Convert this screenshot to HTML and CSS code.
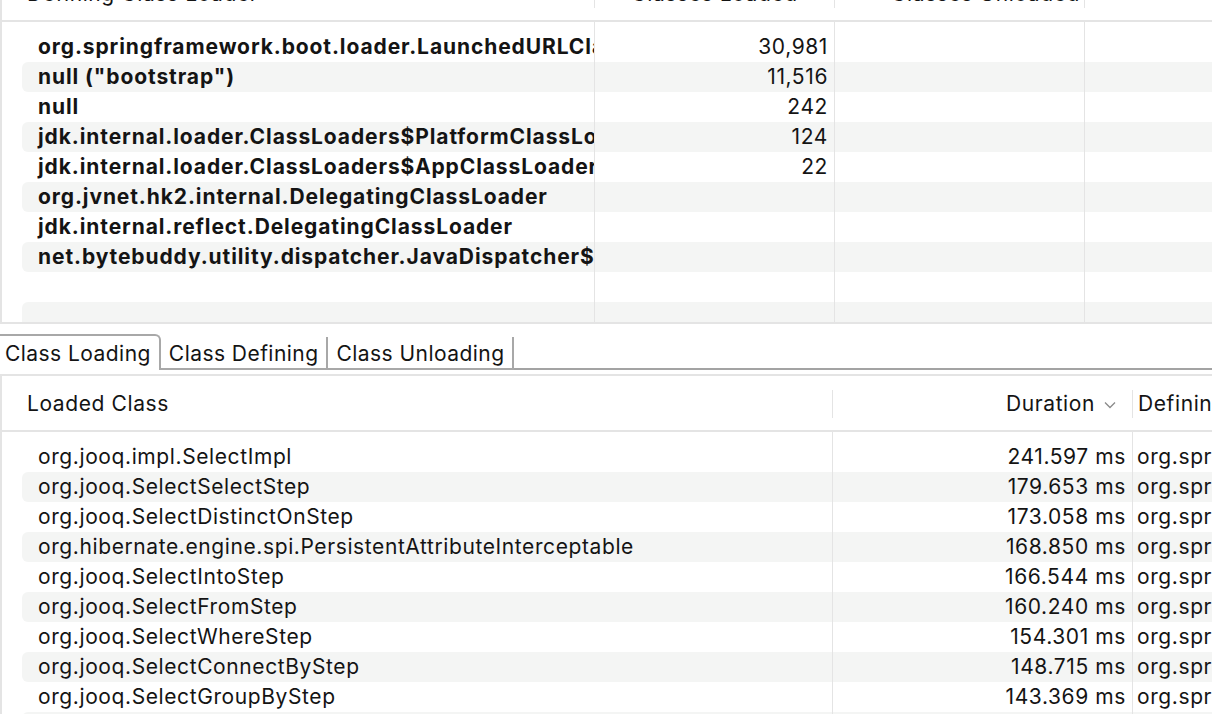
FILE: index.html
```html
<!DOCTYPE html>
<html lang="en">
<head>
<meta charset="utf-8">
<title>Class Loading</title>
<link rel="stylesheet" href="styles.css">
</head>
<body>
<div class="app">
  <section class="panel panel-top">
    <div class="thead cols-top">
      <div class="th th-first">Defining Class Loader</div>
      <div class="th th-center">Classes Loaded</div>
      <div class="th th-right">Classes Unloaded</div>
      <div class="th"></div>
    </div>
    <div class="tbody">
      <div class="row spacer cols-top"><div class="td"></div><div class="td"></div><div class="td"></div><div class="td"></div></div>
      <div class="row cols-top bold"><div class="td name">org.springframework.boot.loader.LaunchedURLClassLoader</div><div class="td num">30,981</div><div class="td"></div><div class="td"></div></div>
      <div class="row alt cols-top bold"><div class="td name">null ("bootstrap")</div><div class="td num">11,516</div><div class="td"></div><div class="td"></div></div>
      <div class="row cols-top bold"><div class="td name">null</div><div class="td num">242</div><div class="td"></div><div class="td"></div></div>
      <div class="row alt cols-top bold"><div class="td name">jdk.internal.loader.ClassLoaders$PlatformClassLoader</div><div class="td num">124</div><div class="td"></div><div class="td"></div></div>
      <div class="row cols-top bold"><div class="td name">jdk.internal.loader.ClassLoaders$AppClassLoader</div><div class="td num">22</div><div class="td"></div><div class="td"></div></div>
      <div class="row alt cols-top bold"><div class="td name">org.jvnet.hk2.internal.DelegatingClassLoader</div><div class="td num"></div><div class="td"></div><div class="td"></div></div>
      <div class="row cols-top bold"><div class="td name">jdk.internal.reflect.DelegatingClassLoader</div><div class="td num"></div><div class="td"></div><div class="td"></div></div>
      <div class="row alt cols-top bold"><div class="td name">net.bytebuddy.utility.dispatcher.JavaDispatcher$DynamicClassLoader</div><div class="td num"></div><div class="td"></div><div class="td"></div></div>
      <div class="row cols-top"><div class="td"></div><div class="td"></div><div class="td"></div><div class="td"></div></div>
      <div class="row alt cols-top"><div class="td"></div><div class="td"></div><div class="td"></div><div class="td"></div></div>
    </div>
  </section>

  <nav class="tabs">
    <div class="tab tab-active">Class Loading</div>
    <div class="tab tab-inactive">Class Defining</div>
    <div class="tab tab-inactive">Class Unloading</div>
    <div class="tab-fill"></div>
  </nav>

  <section class="panel panel-bottom">
    <div class="thead cols-bottom">
      <div class="th th-first">Loaded Class</div>
      <div class="th th-sort">Duration
        <svg class="chev" width="12" height="8" viewBox="0 0 12 8"><polyline points="1,1.5 6,6.5 11,1.5" fill="none" stroke="#8a8a8a" stroke-width="1.3"/></svg>
      </div>
      <div class="th th-def">Defining Class Loader</div>
    </div>
    <div class="tbody tbody-bottom">
      <div class="row spacer cols-bottom"><div class="td"></div><div class="td"></div><div class="td"></div></div>
      <div class="row cols-bottom"><div class="td name">org.jooq.impl.SelectImpl</div><div class="td dur">241.597 ms</div><div class="td def">org.springframework.boot.loader.LaunchedURLClassLoader</div></div>
      <div class="row alt cols-bottom"><div class="td name">org.jooq.SelectSelectStep</div><div class="td dur">179.653 ms</div><div class="td def">org.springframework.boot.loader.LaunchedURLClassLoader</div></div>
      <div class="row cols-bottom"><div class="td name">org.jooq.SelectDistinctOnStep</div><div class="td dur">173.058 ms</div><div class="td def">org.springframework.boot.loader.LaunchedURLClassLoader</div></div>
      <div class="row alt cols-bottom"><div class="td name">org.hibernate.engine.spi.PersistentAttributeInterceptable</div><div class="td dur">168.850 ms</div><div class="td def">org.springframework.boot.loader.LaunchedURLClassLoader</div></div>
      <div class="row cols-bottom"><div class="td name">org.jooq.SelectIntoStep</div><div class="td dur">166.544 ms</div><div class="td def">org.springframework.boot.loader.LaunchedURLClassLoader</div></div>
      <div class="row alt cols-bottom"><div class="td name">org.jooq.SelectFromStep</div><div class="td dur">160.240 ms</div><div class="td def">org.springframework.boot.loader.LaunchedURLClassLoader</div></div>
      <div class="row cols-bottom"><div class="td name">org.jooq.SelectWhereStep</div><div class="td dur">154.301 ms</div><div class="td def">org.springframework.boot.loader.LaunchedURLClassLoader</div></div>
      <div class="row alt cols-bottom"><div class="td name">org.jooq.SelectConnectByStep</div><div class="td dur">148.715 ms</div><div class="td def">org.springframework.boot.loader.LaunchedURLClassLoader</div></div>
      <div class="row cols-bottom"><div class="td name">org.jooq.SelectGroupByStep</div><div class="td dur">143.369 ms</div><div class="td def">org.springframework.boot.loader.LaunchedURLClassLoader</div></div>
      <div class="row alt cols-bottom"><div class="td name"></div><div class="td dur"></div><div class="td def"></div></div>
    </div>
  </section>
</div>
</body>
</html>
```

FILE: styles.css
```css
* { box-sizing: border-box; }
html, body { margin: 0; padding: 0; }
body {
  width: 1212px;
  height: 714px;
  overflow: hidden;
  background: #ffffff;
  font-family: Inter, "Liberation Sans", sans-serif;
  font-size: 21px;
  letter-spacing: 0.6px;
  color: #141414;
}
.app { display: flex; flex-direction: column; height: 714px; }

.panel { border-left: 2px solid #e4e4e4; }
.panel-top { flex: none; margin-top: -34px; border-bottom: 2px solid #e4e4e4; }
.panel-bottom { flex: 1; min-height: 0; margin-top: 4px; border-top: 2px solid #e4e4e4; display: flex; flex-direction: column; }

.cols-top { grid-template-columns: 573px 240px 250px 1fr; }
.cols-bottom { grid-template-columns: 811px 300px 1fr; }

.thead {
  display: grid;
  flex: none;
  padding: 14px 0 12px 20px;
  border-bottom: 2px solid #e4e4e4;
}
.th {
  height: 28px;
  line-height: 28px;
  border-right: 1px solid #e4e4e4;
  white-space: nowrap;
  overflow: hidden;
}
.th:last-child { border-right: none; }
.th-first { padding-left: 5px; }
.th-center { text-align: center; }
.th-right { text-align: right; padding-right: 4px; }
.th-sort { display: flex; justify-content: flex-end; align-items: center; gap: 9px; padding-right: 16px; }
.th-def { padding-left: 5px; }
.chev { display: block; margin-top: 1px; }

.tbody { padding-left: 20px; }
.panel-top .tbody { height: 300px; overflow: hidden; }
.tbody-bottom { flex: 1; overflow: hidden; }

.row { display: grid; height: 30px; }
.row.spacer { height: 10px; }
.row.alt { background: #f4f5f4; border-radius: 6px 0 0 6px; }
.row.bold { font-weight: 700; letter-spacing: 0.9px; }

.td {
  border-right: 1px solid #e4e4e4;
  line-height: 30px;
  white-space: nowrap;
  overflow: hidden;
}
.td:last-child { border-right: none; }
.name { padding-left: 16px; }
.num { text-align: right; padding-right: 6px; font-weight: 400; letter-spacing: 0.6px; }
.dur { text-align: right; padding-right: 6px; }
.def { padding-left: 4px; }

.tabs { flex: none; display: flex; align-items: flex-end; height: 46px; }
.tab { font-size: 21px; letter-spacing: 0.45px; line-height: 24px; white-space: nowrap; color: #141414; }
.tab-active {
  height: 36px;
  padding: 6px 8px 0 5px;
  border-top: 2px solid #a8a8a8;
  border-right: 2px solid #a8a8a8;
  border-top-right-radius: 6px;
}
.tab-inactive {
  height: 33px;
  padding: 5px 8px 0 8px;
  border-right: 2px solid #a8a8a8;
  border-bottom: 2px solid #a8a8a8;
}
.tab-fill { flex: 1; height: 2px; background: #a3a3a3; }
```
